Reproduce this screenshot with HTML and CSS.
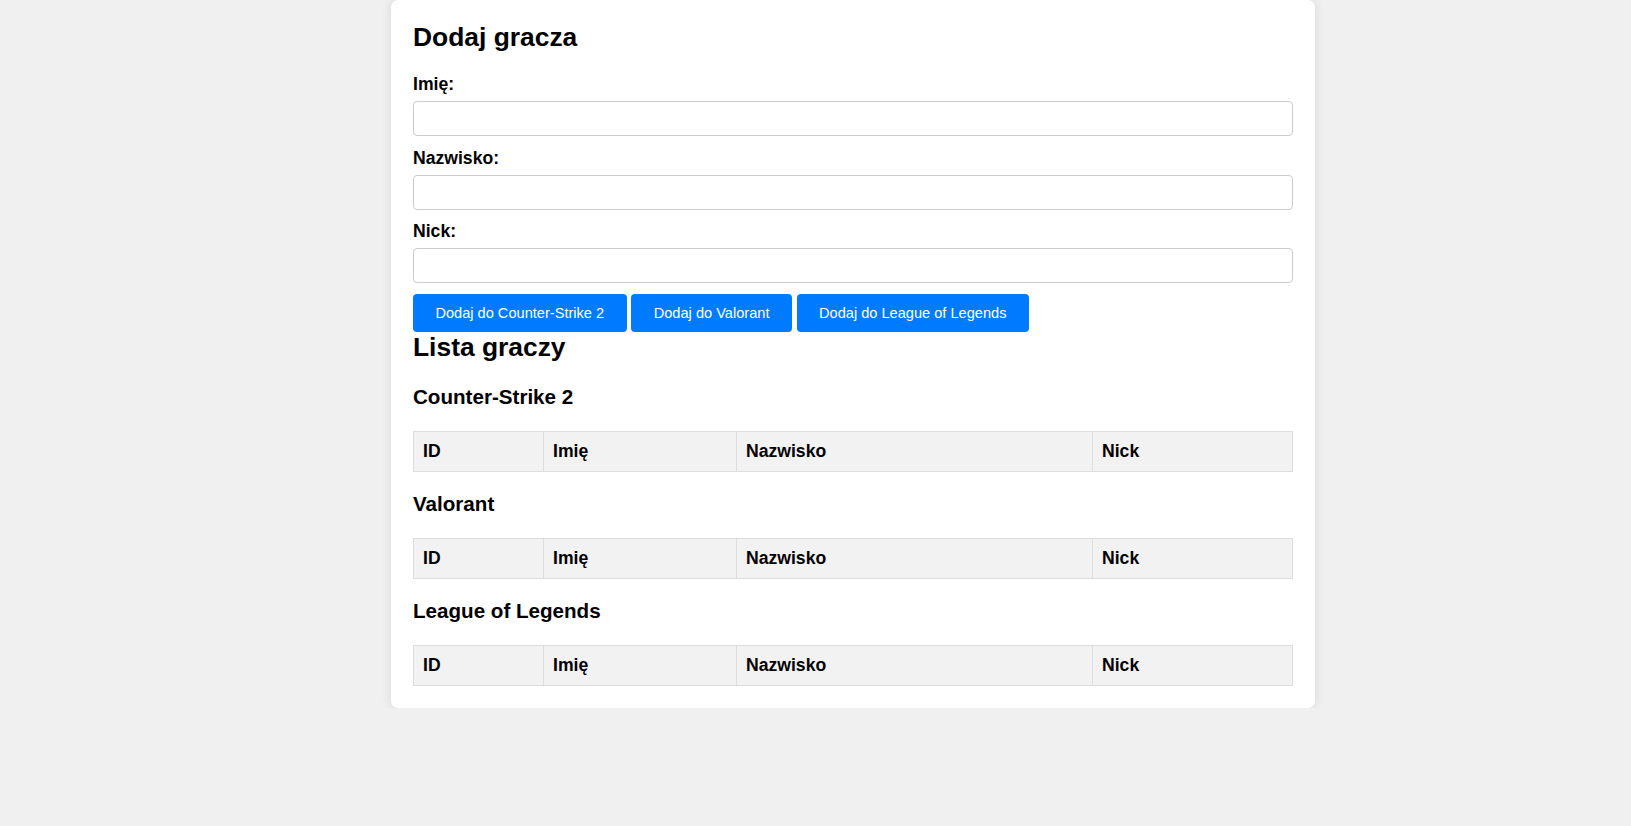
FILE: index.html
```html
<!DOCTYPE html>
<html lang="pl">
<head>
<meta charset="utf-8">
<title>Gracze</title>
<link rel="stylesheet" href="styles.css">
</head>
<body>
<div class="card">
  <h2 class="title">Dodaj gracza</h2>
  <form class="form">
    <label class="label" for="imie">Imię:</label>
    <input class="input" id="imie" type="text">
    <label class="label" for="nazwisko">Nazwisko:</label>
    <input class="input" id="nazwisko" type="text">
    <label class="label" for="nick">Nick:</label>
    <input class="input" id="nick" type="text">
    <div class="buttons">
      <button type="button" class="btn">Dodaj do Counter-Strike 2</button>
      <button type="button" class="btn">Dodaj do Valorant</button>
      <button type="button" class="btn">Dodaj do League of Legends</button>
    </div>
  </form>
  <h2 class="title title-list">Lista graczy</h2>

  <h3 class="game">Counter-Strike 2</h3>
  <table class="players">
    <thead><tr><th class="c-id">ID</th><th class="c-first">Imię</th><th class="c-last">Nazwisko</th><th class="c-nick">Nick</th></tr></thead>
    <tbody></tbody>
  </table>

  <h3 class="game">Valorant</h3>
  <table class="players">
    <thead><tr><th class="c-id">ID</th><th class="c-first">Imię</th><th class="c-last">Nazwisko</th><th class="c-nick">Nick</th></tr></thead>
    <tbody></tbody>
  </table>

  <h3 class="game">League of Legends</h3>
  <table class="players">
    <thead><tr><th class="c-id">ID</th><th class="c-first">Imię</th><th class="c-last">Nazwisko</th><th class="c-nick">Nick</th></tr></thead>
    <tbody></tbody>
  </table>
</div>
</body>
</html>
```

FILE: styles.css
```css
* { box-sizing: border-box; }

html, body {
  margin: 0;
  padding: 0;
  background: #f0f0f0;
  font-family: "Liberation Sans", Arial, sans-serif;
  color: #000;
}

.card {
  width: 924px;
  margin-left: 391px;
  padding: 22px;
  background: #fff;
  border-radius: 7px;
  box-shadow: 0 0 11px rgba(0, 0, 0, 0.1);
}

.title {
  margin: 0 0 22.3px;
  font-size: 26.4px;
  line-height: 30px;
  font-weight: bold;
}

.title-list {
  margin-bottom: 23px;
}

.form {
  display: flex;
  flex-direction: column;
  margin: 0;
}

.label {
  display: block;
  font-size: 17.6px;
  line-height: 21px;
  font-weight: bold;
  margin-bottom: 6px;
}

.input {
  display: block;
  width: 880px;
  height: 35px;
  margin: 0 0 11.3px;
  padding: 0 9px;
  border: 1px solid #ccc;
  border-radius: 4px;
  font-family: inherit;
  font-size: 15px;
  background: #fff;
}

.buttons {
  display: flex;
  gap: 4.8px;
  margin-bottom: 0;
}

.btn {
  height: 37.7px;
  padding: 0 22.4px;
  border: none;
  border-radius: 4px;
  background: #007bff;
  color: #fff;
  font-family: inherit;
  font-size: 14.6px;
  cursor: pointer;
}

.game {
  margin: 0 0 22.3px;
  font-size: 20.6px;
  line-height: 24px;
  font-weight: bold;
}

.players {
  width: 879px;
  border-collapse: collapse;
  table-layout: fixed;
  margin-bottom: 19.7px;
}

.players:last-child {
  margin-bottom: 0;
}

.players th {
  height: 40px;
  padding: 0 9px;
  border: 1px solid #ddd;
  background: #f2f2f2;
  text-align: left;
  font-size: 17.6px;
  font-weight: bold;
}

.c-id { width: 130px; }
.c-first { width: 193px; }
.c-last { width: 356px; }
.c-nick { width: 200px; }
```
